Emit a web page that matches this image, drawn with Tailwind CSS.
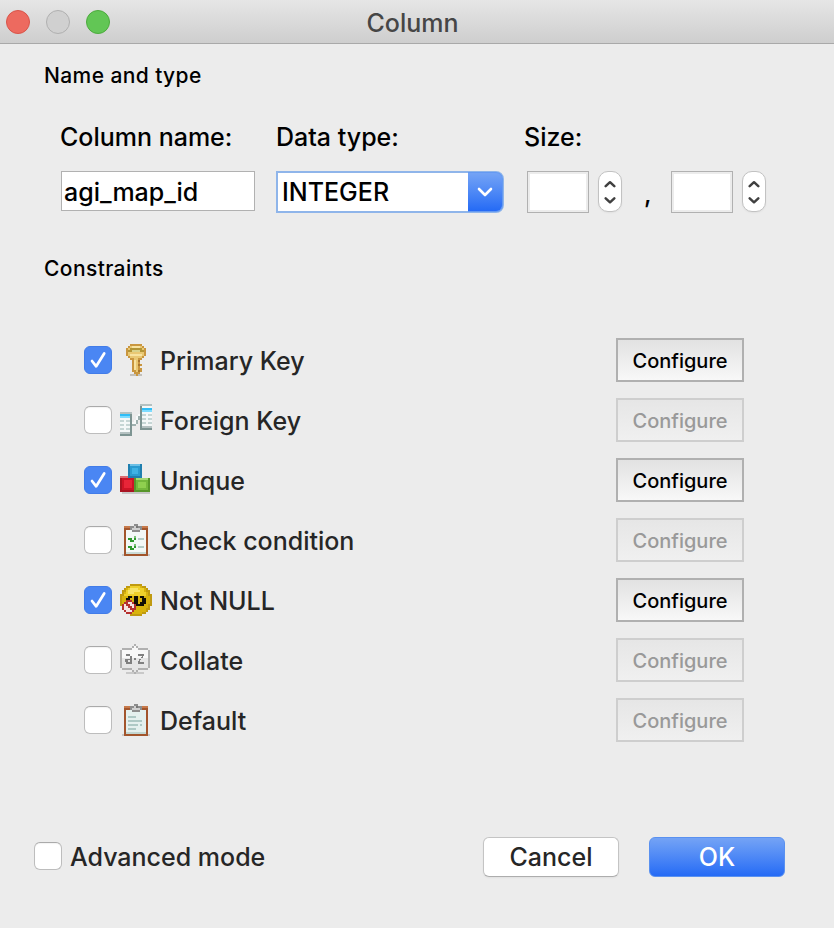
<!DOCTYPE html>
<html lang="en">
<head>
<meta charset="utf-8">
<title>Column</title>
<script src="https://cdn.jsdelivr.net/npm/@tailwindcss/browser@4"></script>
</head>
<body class="bg-[#ececec]">
<div class="w-[834px] h-[928px] overflow-hidden bg-[#ececec] font-['Inter',sans-serif] font-[450] text-[25px] leading-8 text-black flex flex-col">
  <header class="h-11 shrink-0 grid grid-cols-[1fr_auto_1fr] items-center pl-[6px] pt-px border-b border-[#a9a9a9] bg-linear-to-b from-[#e6e6e6] to-[#cecece]">
    <div class="flex gap-4">
      <span class="size-6 rounded-full bg-[#ed6a5f] border border-[#d95449]"></span>
      <span class="size-6 rounded-full bg-[#d0d0d0] border border-[#b0b0b0]"></span>
      <span class="size-6 rounded-full bg-[#62c655] border border-[#4cab3d]"></span>
    </div>
    <h1 class="text-[#464646] pt-[2px] pr-[15px]">Column</h1>
  </header>

  <main class="flex-1">
    <h2 class="pl-11 pt-4 text-[21px] font-medium tracking-[0.4px]">Name and type</h2>
    <section class="flex pl-[60px] pt-[29px]">
      <div class="w-[216px]">
        <div class="h-8 whitespace-nowrap">Column name:</div>
        <div class="mt-[18px] ml-px w-[194px] h-10 bg-white border border-[#b1b1b1] pl-[2px] leading-[40px]">agi_map_id</div>
      </div>
      <div class="w-[248px]">
        <div class="h-8">Data type:</div>
        <div class="mt-[18px] w-[228px] h-[42px] flex rounded-r-lg border-2 border-[#8fb5ea] bg-white">
          <span class="flex-1 pl-[4px] leading-[39px]">INTEGER</span>
          <span class="w-[35px] -mt-px -mb-px -mr-px rounded-r-[7px] bg-linear-to-b from-[#74a3f5] to-[#246af5] border border-[#6499f2] border-l-0 flex items-center justify-center">
            <svg class="w-4 h-[10px]" viewBox="0 0 16 10" fill="none" stroke="white" stroke-width="2.6" stroke-linecap="round" stroke-linejoin="round"><path d="M2 2l6 6 6-6"/></svg>
          </span>
        </div>
      </div>
      <div>
        <div class="h-8">Size:</div>
        <div class="mt-[18px] ml-[3px] flex">
          <div class="w-[62px] h-[42px] bg-white border border-[#b1b1b1] outline-2 -outline-offset-3 outline-[#ececec]"></div>
          <div class="ml-[9px] w-[24px] h-[41px] rounded-[10px] bg-white border border-[#c2c2c2] shadow-xs flex justify-center items-center">
            <svg class="w-3 h-[26px]" viewBox="0 0 12 26" fill="none" stroke="#404040" stroke-width="2.5" stroke-linecap="round" stroke-linejoin="round"><path d="M1.7 7.2L6 3.2l4.3 4M1.7 19.3L6 23.3l4.3-4"/></svg>
          </div>
          <div class="w-[49px] pl-[22px] leading-[46px] h-[42px]">,</div>
          <div class="w-[62px] h-[42px] bg-white border border-[#b1b1b1] outline-2 -outline-offset-3 outline-[#ececec]"></div>
          <div class="ml-[9px] w-[24px] h-[41px] rounded-[10px] bg-white border border-[#c2c2c2] shadow-xs flex justify-center items-center">
            <svg class="w-3 h-[26px]" viewBox="0 0 12 26" fill="none" stroke="#404040" stroke-width="2.5" stroke-linecap="round" stroke-linejoin="round"><path d="M1.7 7.2L6 3.2l4.3 4M1.7 19.3L6 23.3l4.3-4"/></svg>
          </div>
        </div>
      </div>
    </section>

    <h2 class="pl-11 pt-[40px] text-[21px] font-medium tracking-[0.4px]">Constraints</h2>

    <section class="mt-[53px] ml-[84px] w-[660px] flex flex-col gap-4 text-[#262626]">
      <div class="h-11 flex items-center">
        <span class="size-7 rounded-md bg-[#4a86f3] border border-[#427ce8] flex items-center justify-center"><svg class="size-5" viewBox="0 0 20 20" fill="none" stroke="white" stroke-width="2.7" stroke-linecap="round" stroke-linejoin="round"><path d="M4 11l4.2 5.3L16.2 3.5"/></svg></span>
        <svg class="ml-2 size-8" viewBox="0 0 16 16" shape-rendering="crispEdges">
          <path fill="#c2bfb9" d="M5 15h6v1H5z"/>
          <path fill="#c9963f" d="M5 0h6v1h1v1h1v4h-1v1h-1v1h-1v2h1v1h-1v1h1v2h-1v1H9v1H8v-1H7v-1H6V8H5V7H4V6H3V2h1V1h1z"/>
          <path fill="#e9c873" d="M5 1h6v1h1v4h-1v1H9v7H8v-1H7V7H5V6H4V2h1z"/>
          <path fill="#f8e3a0" d="M6 1h4v1H6zM5 5h6v1H5zM7 8h1v5H7z"/>
          <path fill="#b29536" d="M5 2h6v1h1v1H4V3h1z"/><path fill="#d9d28b" d="M6 3h4v1H6z"/>
          <path fill="#a87630" d="M9 8h1v1H9zM9 10h1v1H9zM9 13h1v1H9z"/>
        </svg>
        <span class="ml-2 pt-[2px] flex-1">Primary Key</span>
        <button class="w-32 h-11 pt-px border-2 border-[#b0b0b0] bg-linear-to-b from-[#e2e2e2] to-[#f8f8f8] text-black text-[20px] font-medium">Configure</button>
      </div>
      <div class="h-11 flex items-center">
        <span class="size-7 rounded-md bg-white border border-[#bdbdbd] border-t-[#aaa] inset-shadow-xs"></span>
        <svg class="ml-2 size-8" viewBox="0 0 16 16" shape-rendering="crispEdges">
          <path fill="#b4c1c1" d="M0 4h6v11H0zM10 0h6v12h-6z"/><path fill="#f4f8f8" d="M0 5h5v9H0zM11 1h5v10h-5z"/><path fill="#7d9492" d="M0 15h6v1H0zM10 12h6v1h-6zM5 5h1v10H5zM10 1h1v11h-1z"/><path fill="#2fbdf6" d="M0 5h5v1H0zM11 2h5v1h-5z"/><path fill="#7ddcff" d="M0 6h5v1H0zM11 3h5v1h-5z"/>
          <path fill="#c6d6d5" d="M0 8h2v1H0zM3 8h2v1H3zM0 10h2v1H0zM3 10h2v1H3zM0 12h2v1H0zM3 12h2v1H3zM11 5h2v1h-2zM14 5h2v1h-2zM11 7h2v1h-2zM14 7h2v1h-2zM11 9h2v1h-2zM14 9h2v1h-2z"/>
          <path fill="#9fb1af" d="M6 10h1V9h1V7h1V6h1v2H9v2H8v1H6z"/><path fill="#f7fafa" d="M6 9h1V8h1V6h1V5h1v1H9v2H8v2H6z"/>
        </svg>
        <span class="ml-2 pt-[2px] flex-1">Foreign Key</span>
        <button class="w-32 h-11 pt-px border-2 border-[#cecece] bg-linear-to-b from-[#e6e6e6] to-[#f0f0f0] text-[#999] text-[20px] font-medium">Configure</button>
      </div>
      <div class="h-11 flex items-center">
        <span class="size-7 rounded-md bg-[#4a86f3] border border-[#427ce8] flex items-center justify-center"><svg class="size-5" viewBox="0 0 20 20" fill="none" stroke="white" stroke-width="2.7" stroke-linecap="round" stroke-linejoin="round"><path d="M4 11l4.2 5.3L16.2 3.5"/></svg></span>
        <svg class="ml-2 size-8" viewBox="0 0 16 16" shape-rendering="crispEdges">
          <path fill="#c6c6c6" d="M1 14h14v1H1z"/><path fill="#a91422" d="M0 6h7v8H0z"/><path fill="#dd6a70" d="M0 6h5v1H0z"/><path fill="#ce1426" d="M1 7h6v6H1z"/><path fill="#e82538" d="M2 8h4v4H2z"/>
          <path fill="#1f7faf" d="M4 0h7v7H4z"/><path fill="#6cc0e6" d="M5 0h5v1H5z"/><path fill="#2a9bd0" d="M5 1h5v5H5z"/><path fill="#3fb2e4" d="M6 2h3v3H6z"/>
          <path fill="#57962a" d="M7 7h8v7H7z"/><path fill="#a4d873" d="M8 7h6v1H8z"/><path fill="#74b83c" d="M8 8h6v5H8z"/><path fill="#8fd04f" d="M9 9h4v3H9z"/>
        </svg>
        <span class="ml-2 pt-[2px] flex-1">Unique</span>
        <button class="w-32 h-11 pt-px border-2 border-[#b0b0b0] bg-linear-to-b from-[#e2e2e2] to-[#f8f8f8] text-black text-[20px] font-medium">Configure</button>
      </div>
      <div class="h-11 flex items-center">
        <span class="size-7 rounded-md bg-white border border-[#bdbdbd] border-t-[#aaa] inset-shadow-xs"></span>
        <svg class="ml-2 size-8" viewBox="0 0 16 16" shape-rendering="crispEdges">
          <path fill="#c9c9c9" d="M1 15h14v1H1z"/><path fill="#a2552c" d="M2 1h12v15H2z"/><path fill="#c77a4b" d="M2 1h12v1H2z"/><path fill="#f3f8f7" d="M3 3h10v12H3z"/><path fill="#cadbd7" d="M3 14h10v1H3z"/><path fill="#8d8d8d" d="M5 1h2V0h2v1h2v2h-1v1H6V3H5z"/><path fill="#cfcfcf" d="M7 1h2v1h1v1H6V2h1z"/><path fill="#777" d="M8 1h1v1H8z"/>
          <path fill="#2e982d" d="M4 7h2v1h1V7h1v1H7v1H5V8H4zM4 11h2v1h1v-1h1v1H7v1H5v-1H4z"/><path fill="#7cc47a" d="M7 6h1v1H7zM7 10h1v1H7z"/><path fill="#b5ccc7" d="M9 7h3v1H9zM9 11h3v1H9z"/>
        </svg>
        <span class="ml-2 pt-[2px] flex-1">Check condition</span>
        <button class="w-32 h-11 pt-px border-2 border-[#cecece] bg-linear-to-b from-[#e6e6e6] to-[#f0f0f0] text-[#999] text-[20px] font-medium">Configure</button>
      </div>
      <div class="h-11 flex items-center">
        <span class="size-7 rounded-md bg-[#4a86f3] border border-[#427ce8] flex items-center justify-center"><svg class="size-5" viewBox="0 0 20 20" fill="none" stroke="white" stroke-width="2.7" stroke-linecap="round" stroke-linejoin="round"><path d="M4 11l4.2 5.3L16.2 3.5"/></svg></span>
        <svg class="ml-2 size-8" viewBox="0 0 16 16" shape-rendering="crispEdges">
          <path fill="#c09a10" d="M5 0h6v1h2v1h1v1h1v2h1v6h-1v2h-1v1h-1v1h-2v1H5v-1H3v-1H2v-1H1v-2H0V5h1V3h1V2h1V1h2z"/><path fill="#d9b30c" d="M5 1h6v1h2v2h1v2h1v4h-1v2h-1v2h-2v1H6v-1H3v-2H2v-2H1V6h1V4h1V2h2z"/><path fill="#efd02a" d="M5 1h5v1h2v2h1v2H2V5h1V3h1V2h1z"/><path fill="#f8e468" d="M5 2h4v1h1v1H7v1H4V3h1z"/>
          <path fill="#130f04" d="M4 6h2v1H5v2H3V7h1zM7 6h2v4h1v-1h1V7h-1V6h2v1h1v3h-1v1H8v-1H7z"/>
          <path fill="#b5302f" d="M3 8h3v1h1v1h1v3H7v1H6v1H3v-1H2v-1H1v-3h1V9h1z"/><path fill="#f6e4e2" d="M4 9h2v1h1v2H6v-1H5v-1H4zM2 10h1v1h1v1h1v1h1v1H3v-1H2z"/>
        </svg>
        <span class="ml-2 pt-[2px] flex-1">Not NULL</span>
        <button class="w-32 h-11 pt-px border-2 border-[#b0b0b0] bg-linear-to-b from-[#e2e2e2] to-[#f8f8f8] text-black text-[20px] font-medium">Configure</button>
      </div>
      <div class="h-11 flex items-center">
        <span class="size-7 rounded-md bg-white border border-[#bdbdbd] border-t-[#aaa] inset-shadow-xs"></span>
        <svg class="ml-2 size-8" viewBox="0 0 16 16" shape-rendering="crispEdges">
          <path fill="#c9c9c9" d="M3 14h9v1H3z"/><path fill="#b0b0b0" d="M7 0h1v1h1v1h5v1h1v9h-1v1H9v1H8v1H7v-1H6v-1H1v-1H0V3h1V2h5V1h1z"/><path fill="#f8f8f8" d="M7 1h1v1h1v1h5v4H1V3h5V2h1z"/><path fill="#e6e6e6" d="M1 7h13v5H9v1H8v1H7v-1H6v-1H1z"/>
          <path fill="#808080" d="M3 5h2v1h1v4H3V9H2.5V7.5H5V6H3zM7 7h1v1H7zM9 5h3v1h-.5v1h-1v1H10v1h2v1H9V8.500h.5v-1h1v-1h.5V6H9z"/><path fill="#e6e6e6" d="M4 8h1v1H4z"/>
        </svg>
        <span class="ml-2 pt-[2px] flex-1">Collate</span>
        <button class="w-32 h-11 pt-px border-2 border-[#cecece] bg-linear-to-b from-[#e6e6e6] to-[#f0f0f0] text-[#999] text-[20px] font-medium">Configure</button>
      </div>
      <div class="h-11 flex items-center">
        <span class="size-7 rounded-md bg-white border border-[#bdbdbd] border-t-[#aaa] inset-shadow-xs"></span>
        <svg class="ml-2 size-8" viewBox="0 0 16 16" shape-rendering="crispEdges">
          <path fill="#c9c9c9" d="M1 15h14v1H1z"/><path fill="#a2552c" d="M2 1h12v15H2z"/><path fill="#c77a4b" d="M2 1h12v1H2z"/><path fill="#e4f0ee" d="M3 3h10v12H3z"/><path fill="#c2d6d1" d="M3 14h10v1H3z"/><path fill="#8d8d8d" d="M5 1h2V0h2v1h2v2h-1v1H6V3H5z"/><path fill="#cfcfcf" d="M7 1h2v1h1v1H6V2h1z"/><path fill="#777" d="M8 1h1v1H8z"/>
          <path fill="#aec9c5" d="M4 6h4v1H4zM4 8h7v1H4zM4 10h5v1H4zM10 10h1v1h-1zM4 12h4v1H4z"/>
        </svg>
        <span class="ml-2 pt-[2px] flex-1">Default</span>
        <button class="w-32 h-11 pt-px border-2 border-[#cecece] bg-linear-to-b from-[#e6e6e6] to-[#f0f0f0] text-[#999] text-[20px] font-medium">Configure</button>
      </div>
    </section>
  </main>

  <footer class="h-[91px] shrink-0 pl-[34px] pr-[49px] flex items-start text-[#262626]">
    <div class="flex-1 flex items-center h-[38px]">
      <span class="size-7 rounded-md bg-white border border-[#bdbdbd] border-t-[#aaa] inset-shadow-xs"></span>
      <span class="ml-2 pt-[2px]">Advanced mode</span>
    </div>
    <button class="w-[136px] h-10 rounded-md bg-white border border-[#c4c4c4] border-b-[#adadad] shadow-xs">Cancel</button>
    <button class="ml-[30px] w-[136px] h-10 rounded-md text-white bg-linear-to-b from-[#74a3f5] to-[#246af5] border border-[#5a91f0]">OK</button>
  </footer>
</div>
</body>
</html>
